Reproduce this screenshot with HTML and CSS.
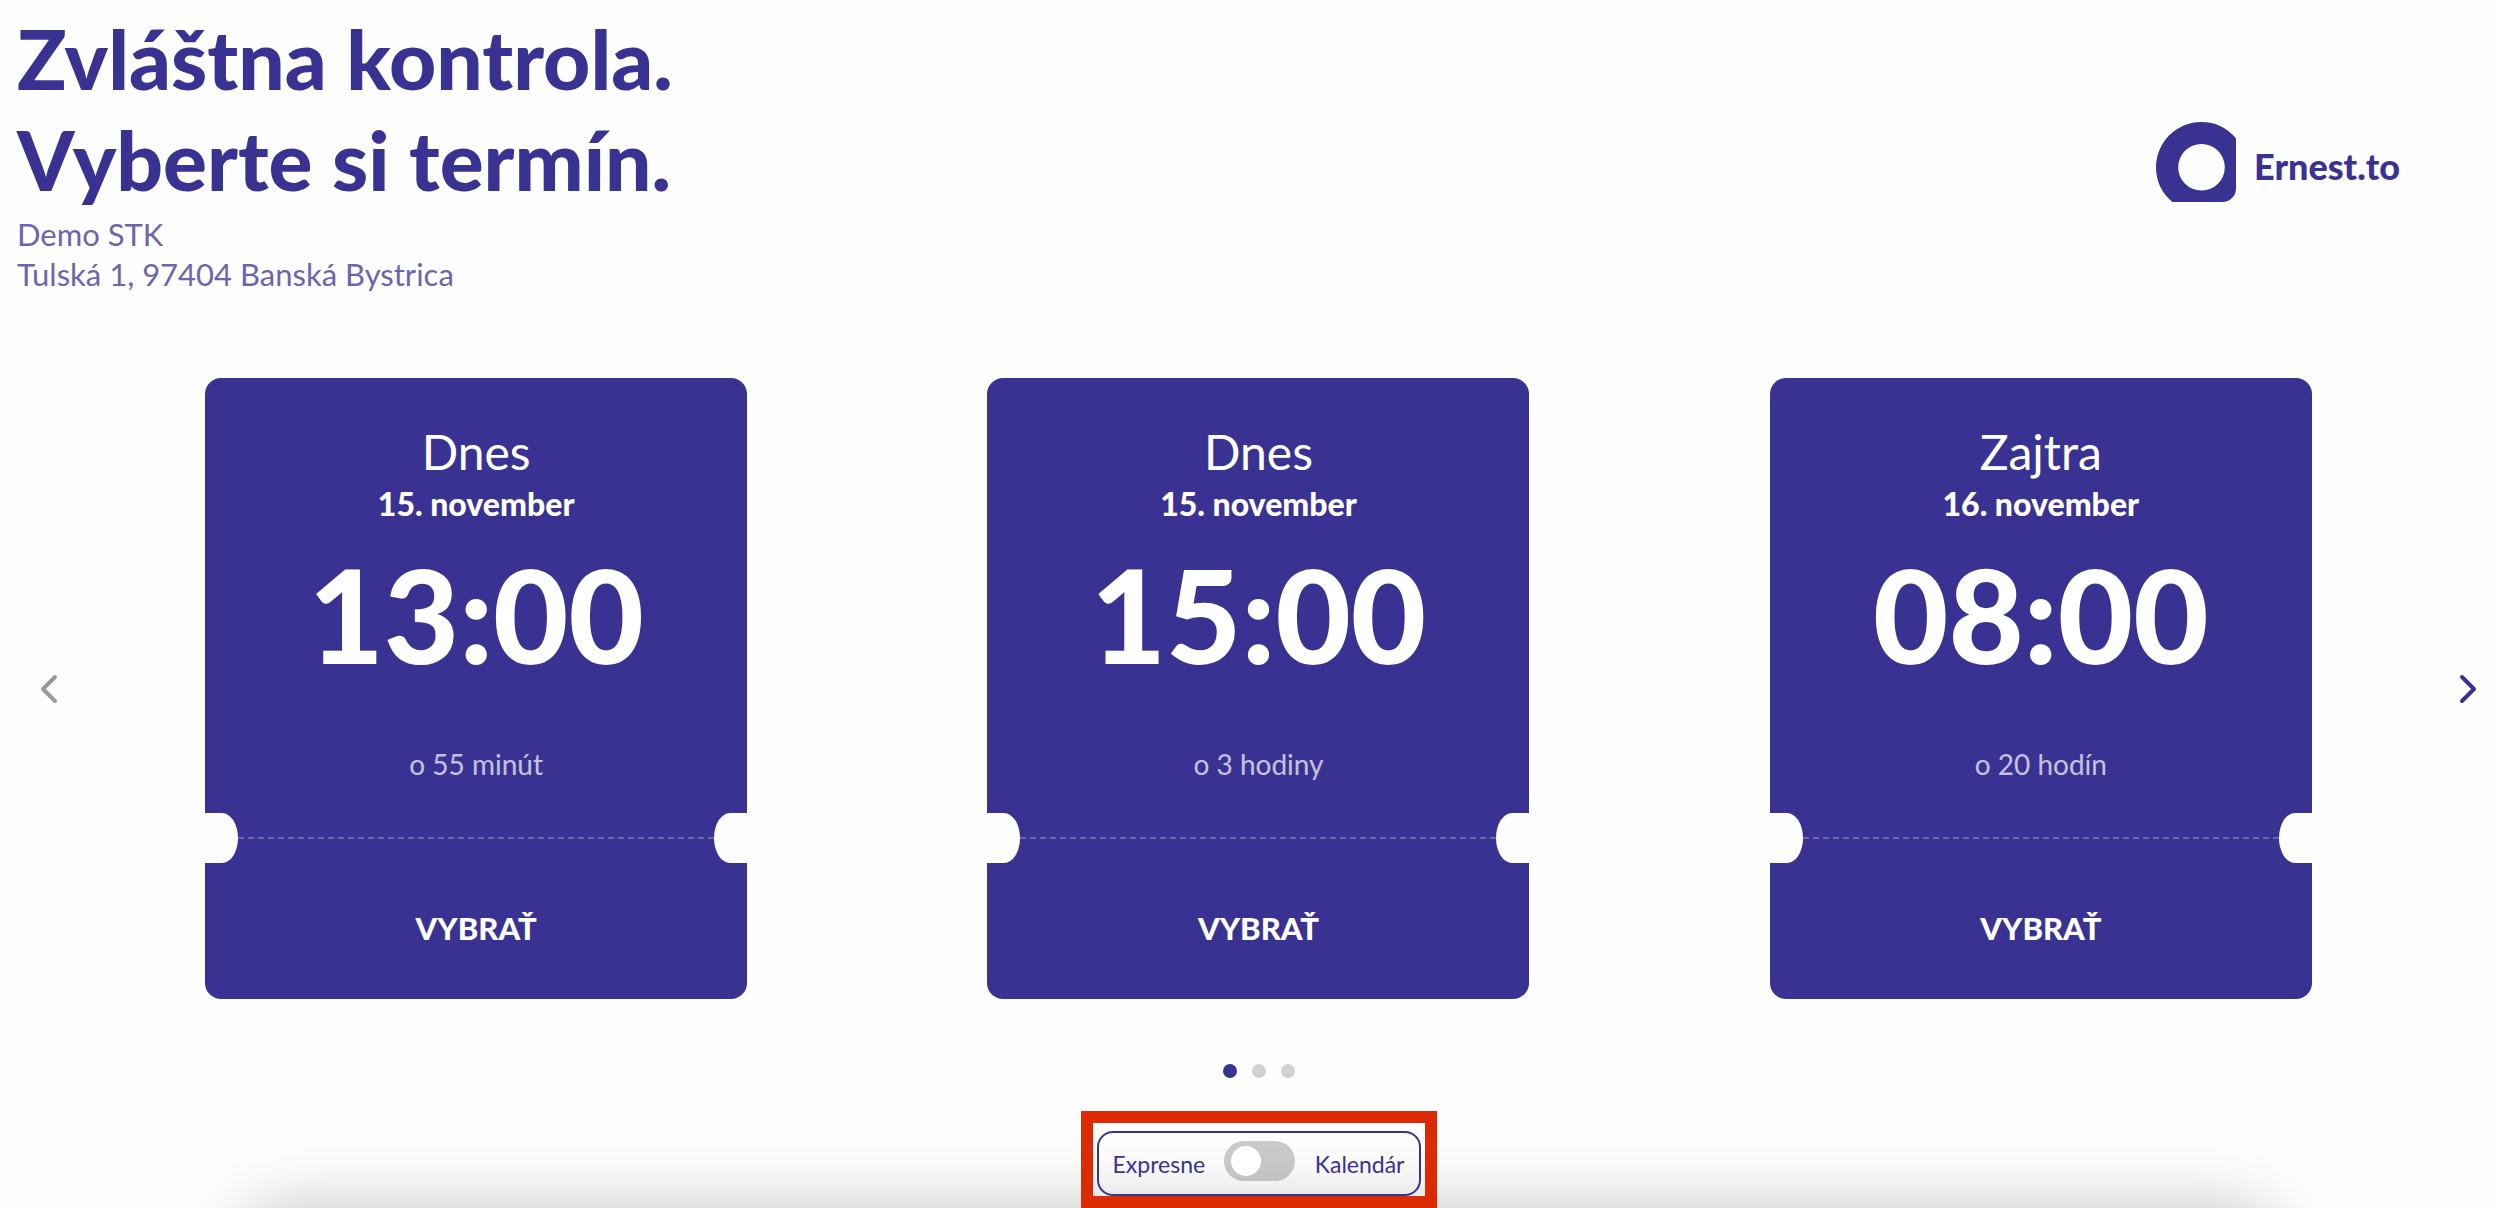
FILE: index.html
```html
<!DOCTYPE html>
<html lang="sk">
<head>
    <meta charset="UTF-8">
    <meta name="viewport" content="width=device-width, initial-scale=1.0">
    <title>Ernest.to - Vyberte si termín</title>
    <link rel="stylesheet" href="styles.css">
</head>
<body>
    <!-- Header -->
    <header class="header">
        <div class="intro">
            <h1>Zvláštna kontrola.<br>Vyberte si termín.</h1>
            <p>Demo STK<br>Tulská 1, 97404 Banská Bystrica</p>
        </div>
        <a class="logo" href="#">
            <svg width="80" height="80" viewBox="0 0 80 80" aria-hidden="true">
                <path fill="currentColor" fill-rule="evenodd" d="M80 16.4A45.3 45.3 0 0 0 45.3 0A45.3 45.3 0 0 0 0 45.3A45.3 45.3 0 0 0 16.4 80H66.5A13.5 13.5 0 0 0 80 66.5ZM45.5 22A23.3 23.3 0 1 1 45.5 68.6A23.3 23.3 0 1 1 45.5 22Z"/>
            </svg>
            <span>Ernest.to</span>
        </a>
    </header>

    <!-- Free slots -->
    <main>
        <div class="carousel">
            <button class="arrow" type="button" aria-label="Predchádzajúce" disabled>
                <svg width="32" height="32" viewBox="0 0 32 32"><path d="M20 4L8 16L20 28"/></svg>
            </button>
            <div class="slides">
                <article class="ticket">
                    <h2>Dnes</h2>
                    <p class="date">15. november</p>
                    <p class="time">13:00</p>
                    <p class="left">o 55 minút</p>
                    <div class="tear"><span class="line"></span></div>
                    <button class="pick" type="button">VYBRAŤ</button>
                </article>
                <article class="ticket">
                    <h2>Dnes</h2>
                    <p class="date">15. november</p>
                    <p class="time">15:00</p>
                    <p class="left">o 3 hodiny</p>
                    <div class="tear"><span class="line"></span></div>
                    <button class="pick" type="button">VYBRAŤ</button>
                </article>
                <article class="ticket">
                    <h2>Zajtra</h2>
                    <p class="date">16. november</p>
                    <p class="time">08:00</p>
                    <p class="left">o 20 hodín</p>
                    <div class="tear"><span class="line"></span></div>
                    <button class="pick" type="button">VYBRAŤ</button>
                </article>
            </div>
            <button class="arrow" type="button" aria-label="Ďalšie">
                <svg width="32" height="32" viewBox="0 0 32 32"><path d="M12 4L24 16L12 28"/></svg>
            </button>
        </div>

        <div class="dots">
            <button class="dot active" type="button" aria-label="Strana 1"></button>
            <button class="dot" type="button" aria-label="Strana 2"></button>
            <button class="dot" type="button" aria-label="Strana 3"></button>
        </div>

        <!-- View switch -->
        <div class="highlight">
            <label class="switch" for="view">
                <span>Expresne</span>
                <input type="checkbox" id="view">
                <span>Kalendár</span>
            </label>
        </div>
    </main>

    <div class="bottom-panel"></div>
</body>
</html>
```

FILE: styles.css
```css
/* General Styles */
* {
    box-sizing: border-box;
}

html {
    overflow: hidden;
}

body {
    font-family: Lato, sans-serif;
    color: #3a3292;
    background-color: #fefefe;
    margin: 0;
    padding-left: 17px;
    height: 100vh;
    overflow: hidden;
}

h1, h2, p {
    margin: 0;
}

button {
    font-family: inherit;
    color: inherit;
    background: none;
    border: none;
    padding: 0;
    cursor: pointer;
}

/* Header */
.header {
    display: flex;
    justify-content: space-between;
    align-items: center;
    padding: 8px 100px 0 0;
    margin-bottom: 84px;
}

.intro h1 {
    font-size: 82px;
    font-weight: 900;
    line-height: 101px;
}

.intro p {
    font-size: 31px;
    line-height: 40px;
    opacity: 0.75;
    padding-top: 4px;
}

.logo {
    display: flex;
    align-items: center;
    gap: 18px;
    margin-top: 22px;
    color: #3a3292;
    font-size: 36px;
    font-weight: 900;
    text-decoration: none;
}

.logo span {
    padding-top: 8px;
}

/* Carousel */
.carousel {
    display: flex;
    align-items: center;
    padding: 0 18px;
}

.arrow {
    display: flex;
    width: 32px;
}

.arrow path {
    fill: none;
    stroke: currentColor;
    stroke-width: 4;
    stroke-linecap: round;
    stroke-linejoin: round;
}

.arrow:disabled {
    color: #999;
    cursor: default;
}

.slides {
    flex: 1;
    display: grid;
    grid-template-columns: repeat(3, 1fr);
    padding: 0 18px;
}

.ticket {
    width: 542px;
    max-width: 90%;
    margin: 0 auto;
    padding-top: 46px;
    border-radius: 16px;
    background-color: #3a3292;
    color: white;
    text-align: center;
}

.ticket h2 {
    font-size: 48px;
    font-weight: normal;
    line-height: 56px;
}

.date {
    font-size: 32px;
    font-weight: 900;
    line-height: 48px;
}

.time {
    font-size: 130px;
    font-weight: 900;
    line-height: 172px;
}

.left {
    font-size: 28px;
    line-height: 40px;
    padding: 44px 0 29px;
    opacity: 0.7;
}

/* Perforated edge with a cut-out on each side */
.tear {
    display: flex;
    align-items: center;
}

.tear::before,
.tear::after {
    content: "";
    width: 33px;
    height: 50px;
    background-color: #fefefe;
}

.tear::before {
    border-radius: 0 16px 16px 0 / 0 25px 25px 0;
}

.tear::after {
    border-radius: 16px 0 0 16px / 25px 0 0 25px;
}

.line {
    flex: 1;
    border-top: 2px dashed rgba(255, 255, 255, 0.25);
}

.pick {
    width: 100%;
    height: 136px;
    padding-bottom: 6px;
    font-size: 31px;
    font-weight: 900;
}

/* Pager */
.dots {
    display: flex;
    justify-content: center;
    gap: 15px;
    padding: 65px 0 33px;
}

.dot {
    width: 14px;
    height: 14px;
    border-radius: 50%;
    background-color: #d1d1d1;
}

.dot.active {
    background-color: #3a3292;
}

/* View switch */
.highlight {
    position: relative;
    z-index: 1;
    width: fit-content;
    margin: 0 auto;
    padding: 8px 4px 0;
    border: 12px solid #dc2a05;
}

.switch {
    display: flex;
    justify-content: space-between;
    align-items: center;
    width: 324px;
    height: 65px;
    padding: 0 14px;
    border: 2px solid #3a3292;
    border-radius: 16px;
    font-size: 23px;
    cursor: pointer;
}

.switch input {
    appearance: none;
    width: 71px;
    height: 40px;
    margin: 0 0 6px;
    padding: 5px 7px;
    border-radius: 20px;
    background-color: rgba(0, 0, 0, 0.2);
    cursor: pointer;
}

.switch input::before {
    content: "";
    display: block;
    width: 30px;
    height: 30px;
    border-radius: 50%;
    background-color: white;
}

.switch input:checked::before {
    margin-left: auto;
}

/* Panel under the fold, only its shadow is visible here */
.bottom-panel {
    height: 400px;
    margin: 12px 234px 0;
    box-shadow: 0 0 72px rgba(0, 0, 0, 0.32);
}
```
